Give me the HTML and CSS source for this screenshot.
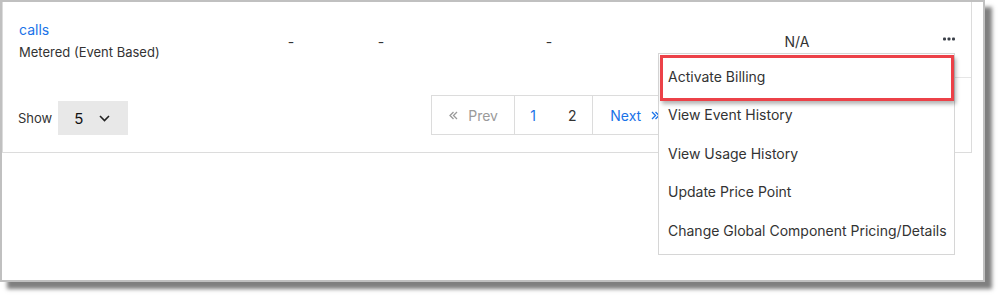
FILE: index.html
```html
<!DOCTYPE html>
<html lang="en">
<head>
<meta charset="utf-8">
<title>Components</title>
<link rel="stylesheet" href="styles.css">
</head>
<body>
<div class="frame">
  <div class="card">
    <div class="row">
      <div class="cell name">
        <a class="link" href="#">calls</a>
        <div class="kind">Metered (Event Based)</div>
      </div>
      <div class="cell c">-</div>
      <div class="cell c">-</div>
      <div class="cell c">-</div>
      <div class="cell c">N/A</div>
      <div class="cell actions">
        <svg class="dots" width="12" height="4" viewBox="0 0 12 4"><rect x="0" y="0.5" width="3" height="3" rx="1" fill="#3a3f48"/><rect x="4.5" y="0.5" width="3" height="3" rx="1" fill="#3a3f48"/><rect x="9" y="0.5" width="3" height="3" rx="1" fill="#3a3f48"/></svg>
        <div class="menu">
          <div class="item">Activate Billing</div>
          <div class="item">View Event History</div>
          <div class="item">View Usage History</div>
          <div class="item">Update Price Point</div>
          <div class="item">Change Global Component Pricing/Details</div>
          <div class="highlight"></div>
        </div>
      </div>
    </div>
    <div class="footer">
      <div class="show">
        <span class="show-label">Show</span>
        <div class="select">
          <span>5</span>
          <svg width="11" height="7" viewBox="0 0 11 7"><path d="M1 1l4.5 4.5L10 1" fill="none" stroke="#222" stroke-width="1.6"/></svg>
        </div>
      </div>
      <div class="pager">
        <div class="seg prev">
          <svg width="9" height="9" viewBox="0 0 9 9"><path d="M4.5 1L1 4.5 4.5 8M8 1L4.5 4.5 8 8" fill="none" stroke="#9a9a9a" stroke-width="1.3"/></svg>
          <span>Prev</span>
        </div>
        <div class="seg pages">
          <span class="pg active">1</span>
          <span class="pg">2</span>
        </div>
        <div class="seg next">
          <span>Next</span>
          <svg width="9" height="9" viewBox="0 0 9 9"><path d="M1 1l3.5 3.5L1 8M4.5 1L8 4.5 4.5 8" fill="none" stroke="#1a73e8" stroke-width="1.3"/></svg>
        </div>
      </div>
    </div>
  </div>
</div>
</body>
</html>
```
FILE: styles.css
```css
* { box-sizing: border-box; }
html, body { margin: 0; padding: 0; background: #fff; }
body {
  width: 1001px;
  height: 296px;
  font-family: Inter, "Noto Sans", sans-serif;
  color: #333;
  overflow: hidden;
}
.frame {
  width: 985px;
  height: 282px;
  border: 2px solid #c0c0c0;
  background: #fff;
  box-shadow: 7px 7px 4px rgba(0, 0, 0, 0.5);
}
.card {
  width: 970px;
  height: 151px;
  border: 1px solid #dcdcdc;
  border-top: none;
}
.row {
  display: grid;
  grid-template-columns: 232px 80px 100px 236px 260px 44px;
  padding-left: 16px;
  align-items: center;
  height: 76px;
}
.cell { font-size: 14px; }
.c { text-align: center; padding-top: 2px; }
.name { padding-top: 0; }
.link {
  display: block;
  color: #1a73e8;
  text-decoration: none;
  font-size: 14px;
  line-height: 20px;
}
.kind {
  font-size: 13px;
  line-height: 18px;
  margin-top: 3px;
  color: #333;
}
.actions {
  position: relative;
  align-self: stretch;
  border-bottom: 1px solid #e6e6e6;
  display: flex;
  justify-content: center;
  align-items: flex-start;
  padding-top: 35px;
  padding-right: 1px;
}
.dots { display: block; }
.menu {
  position: absolute;
  left: -269px;
  top: 51px;
  width: 297px;
  background: #fff;
  border: 1px solid #d6d6d6;
  padding: 3px 0 4px;
  z-index: 2;
}
.item {
  height: 38.5px;
  display: flex;
  align-items: center;
  padding-left: 9px;
  font-size: 14px;
  color: #333;
  white-space: nowrap;
}
.highlight {
  position: absolute;
  left: 1px;
  top: 1px;
  width: 294px;
  height: 46px;
  border: 3px solid #ec4148;
  box-shadow: 2px 3px 4px rgba(0, 0, 0, 0.3);
}
.footer {
  display: flex;
  align-items: flex-start;
  padding: 17px 0 17px 15px;
}
.show {
  display: flex;
  align-items: center;
  margin-top: 6px;
}
.show-label { font-size: 13px; color: #333; }
.select {
  margin-left: 6px;
  width: 70px;
  height: 34px;
  background: #e8e8e8;
  display: flex;
  align-items: center;
  padding-left: 16px;
  gap: 16px;
  font-size: 15px;
  color: #111;
}
.select svg { display: block; }
.pager {
  margin-left: 303px;
  display: flex;
  height: 40px;
  border: 1px solid #dcdcdc;
}
.seg {
  display: flex;
  align-items: center;
  font-size: 14px;
}
.prev {
  width: 83px;
  padding-left: 17px;
  gap: 10px;
  color: #9a9a9a;
  border-right: 1px solid #dcdcdc;
}
.pages {
  width: 78px;
  border-right: 1px solid #dcdcdc;
  padding-left: 15px;
  gap: 32px;
}
.pg { color: #333; }
.pg.active { color: #1a73e8; }
.next {
  width: 84px;
  padding-left: 17px;
  gap: 10px;
  color: #1a73e8;
}
.seg svg { display: block; }
```
